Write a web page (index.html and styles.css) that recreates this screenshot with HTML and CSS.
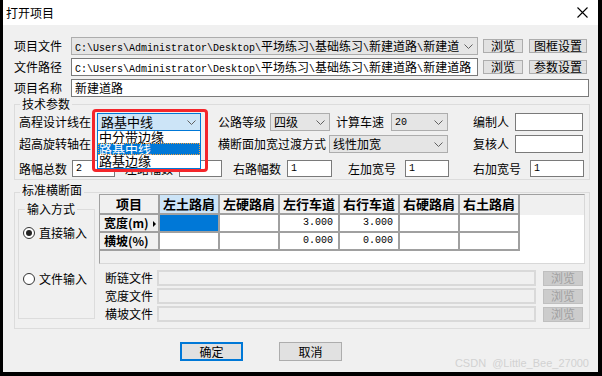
FILE: index.html
```html
<!DOCTYPE html>
<html lang="zh-CN">
<head>
    <meta charset="UTF-8">
    <meta name="viewport" content="width=device-width, initial-scale=1.0">
    <title>打开项目</title>
    <link rel="stylesheet" href="styles.css">
</head>
<body>
<div class="dialog">
    <div class="titlebar">
        <span>打开项目</span>
        <svg class="close" width="11" height="11" viewBox="0 0 11 11"><path d="M0.5 0.5L10.5 10.5M10.5 0.5L0.5 10.5" stroke="#000" stroke-width="1.1" fill="none"/></svg>
    </div>

    <div class="content">
        <div class="row r1">
            <span class="lbl w57">项目文件</span>
            <div class="combo w407">
                <span class="val"><span class="asc">C:\Users\Administrator\Desktop\</span>平场练习<span class="asc">\</span>基础练习<span class="asc">\</span>新建道路<span class="asc">\</span>新建道</span>
                <svg class="arr" width="9" height="5" viewBox="0 0 9 5"><path d="M0.5 0.5L4.5 4.5L8.5 0.5" fill="none" stroke="#606060"/></svg>
            </div>
            <button class="btn ml5 w40">浏览</button>
            <button class="btn ml6 w58">图框设置</button>
        </div>
        <div class="row">
            <span class="lbl w57">文件路径</span>
            <div class="field w407"><span class="val"><span class="asc">C:\Users\Administrator\Desktop\</span>平场练习<span class="asc">\</span>基础练习<span class="asc">\</span>新建道路<span class="asc">\</span>新建道路</span></div>
            <button class="btn ml5 w40">浏览</button>
            <button class="btn ml6 w58">参数设置</button>
        </div>
        <div class="row">
            <span class="lbl w57">项目名称</span>
            <div class="field w518"><span class="val">新建道路</span></div>
        </div>

        <div class="group g1">
            <span class="gtitle">技术参数</span>
            <div class="grow">
                <span class="lbl w78">高程设计线在</span>
                <div class="combo active w104">
                    <span class="val">路基中线</span>
                    <svg class="arr" width="9" height="5" viewBox="0 0 9 5"><path d="M0.5 0.5L4.5 4.5L8.5 0.5" fill="none" stroke="#606060"/></svg>
                    <div class="droplist">
                        <div class="item">中分带边缘</div>
                        <div class="item sel">路基中线</div>
                        <div class="item">路基边缘</div>
                    </div>
                    <div class="mark"></div>
                </div>
                <span class="lbl ml17 w52">公路等级</span>
                <div class="combo w60">
                    <span class="val">四级</span>
                    <svg class="arr" width="9" height="5" viewBox="0 0 9 5"><path d="M0.5 0.5L4.5 4.5L8.5 0.5" fill="none" stroke="#606060"/></svg>
                </div>
                <span class="lbl ml6 w55">计算车速</span>
                <div class="combo w57">
                    <span class="val asc">20</span>
                    <svg class="arr" width="9" height="5" viewBox="0 0 9 5"><path d="M0.5 0.5L4.5 4.5L8.5 0.5" fill="none" stroke="#606060"/></svg>
                </div>
                <span class="lbl ml25 w42">编制人</span>
                <div class="field w68"></div>
            </div>
            <div class="grow gb">
                <span class="lbl w78">超高旋转轴在</span>
                <div class="combo w104">
                    <span class="val">路基中线</span>
                </div>
                <span class="lbl ml17 w111">横断面加宽过渡方式</span>
                <div class="combo w119">
                    <span class="val">线性加宽</span>
                    <svg class="arr" width="9" height="5" viewBox="0 0 9 5"><path d="M0.5 0.5L4.5 4.5L8.5 0.5" fill="none" stroke="#606060"/></svg>
                </div>
                <span class="lbl ml25 w42">复核人</span>
                <div class="field w68"></div>
            </div>
            <div class="grow gc">
                <span class="lbl w53">路幅总数</span>
                <div class="field w43"><span class="val asc">2</span></div>
                <span class="lbl ml10 w54">左路幅数</span>
                <div class="field w43"><span class="val asc">1</span></div>
                <span class="lbl ml11 w54">右路幅数</span>
                <div class="field w45"><span class="val asc">1</span></div>
                <span class="lbl ml16 w57">左加宽号</span>
                <div class="field w44"><span class="val asc">1</span></div>
                <span class="lbl ml24 w57">右加宽号</span>
                <div class="field w54"><span class="val asc">1</span></div>
            </div>
        </div>

        <div class="group g2">
            <span class="gtitle t2">标准横断面</span>
            <div class="group mode">
                <span class="gtitle t3">输入方式</span>
                <div class="radio on"><span class="dot"></span>直接输入</div>
                <div class="radio"><span class="dot"></span>文件输入</div>
            </div>
            <div class="right">
                <div class="gridbox">
                    <table class="grid">
                        <tr>
                            <th class="c0">项目</th>
                            <th class="hsel">左土路肩</th>
                            <th>左硬路肩</th>
                            <th>左行车道</th>
                            <th>右行车道</th>
                            <th>右硬路肩</th>
                            <th>右土路肩</th>
                        </tr>
                        <tr>
                            <th class="rh">宽度(m)<span class="ptr"></span></th>
                            <td class="cur"></td>
                            <td></td>
                            <td class="num">3.000</td>
                            <td class="num">3.000</td>
                            <td></td>
                            <td></td>
                        </tr>
                        <tr>
                            <th class="rh">横坡(%)</th>
                            <td></td>
                            <td></td>
                            <td class="num">0.000</td>
                            <td class="num">0.000</td>
                            <td></td>
                            <td></td>
                        </tr>
                    </table>
                </div>
                <div class="frow f1">
                    <span class="lbl w52">断链文件</span>
                    <div class="field off w379"></div>
                    <button class="btn dis">浏览</button>
                </div>
                <div class="frow">
                    <span class="lbl w52">宽度文件</span>
                    <div class="field off w379"></div>
                    <button class="btn dis">浏览</button>
                </div>
                <div class="frow">
                    <span class="lbl w52">横坡文件</span>
                    <div class="field off w379"></div>
                    <button class="btn dis">浏览</button>
                </div>
            </div>
        </div>

        <div class="actions">
            <button class="btn big ok">确定</button>
            <button class="btn big">取消</button>
        </div>
    </div>

    <div class="watermark">CSDN&nbsp; @Little_Bee_27000</div>
</div>
</body>
</html>
```

FILE: styles.css
```css
* { box-sizing: border-box; }
body { margin: 0; width: 602px; height: 376px; overflow: hidden; background: #000; color: #000; font: 12px/14px "Noto Sans CJK SC", sans-serif; }

.dialog { position: relative; margin-left: 3px; width: 595px; height: 372px; background: #f0f0f0; }
.titlebar { height: 25px; background: #fff; display: flex; align-items: center; justify-content: space-between; padding: 0 10px 0 3px; }

.content { padding: 0 8px 0 11px; }
.row { display: flex; align-items: center; height: 18px; margin-top: 3px; }
.r1 { margin-top: 12px; }
.lbl { flex: none; white-space: nowrap; }

.combo, .field { flex: none; height: 18px; display: flex; align-items: center; justify-content: space-between; overflow: visible; white-space: nowrap; }
.combo { background: #e5e5e5; border: 1px solid #adadad; padding: 0 4px 0 3px; }
.field { background: #fff; border: 1px solid #7a7a7a; padding: 0 3px; }
.val { overflow: hidden; }
.asc { font: 10px "Liberation Mono", monospace; }
.arr { flex: none; }

.btn { flex: none; height: 14px; padding: 0; font: 12px/12px "Noto Sans CJK SC", sans-serif; background: #e1e1e1; border: 1px solid #adadad; color: #000; }

/* group boxes */
.group { position: relative; border: 1px solid #dcdcdc; }
.gtitle { position: absolute; top: -8px; left: 5px; padding: 0 2px; background: #f0f0f0; }
.g1 { margin-top: 7px; height: 76px; padding: 8px 0 0 4px; }
.grow { display: flex; align-items: center; height: 18px; }
.gb { margin-top: 4px; }
.gc { margin-top: 7px; height: 17px; }
.gc .field { height: 17px; }

.combo.active { position: relative; background: #cce4f7; border-color: #0078d7; font-size: 13px; }
.droplist { position: absolute; left: -1px; top: 17px; width: 104px; height: 38px; background: #fff; border: 1px solid #0078d7; border-top: none; font-size: 13px; line-height: 12px; }
.item { height: 12px; padding-left: 1px; }
.item.sel { background: #0078d7; color: #fff; outline: 1px dotted #f0a040; outline-offset: -1px; }
.mark { position: absolute; left: -6px; top: -5px; width: 116px; height: 63px; border: 3px solid #f4262b; border-radius: 4px; }

.g2 { margin-top: 12px; height: 137px; display: flex; align-items: flex-start; }
.t2 { top: -10px; }
.mode { flex: none; margin: 16px 0 0 3px; width: 77px; height: 110px; padding: 16px 0 0 4px; }
.t3 { left: 6px; }
.radio { display: flex; align-items: center; height: 14px; }
.radio + .radio { margin-top: 32px; }
.dot { width: 12px; height: 12px; margin-right: 4px; border: 1px solid #333; border-radius: 50%; background: #fff; display: flex; align-items: center; justify-content: center; }
.radio.on .dot::after { content: ""; width: 6px; height: 6px; border-radius: 50%; background: #222; }

.right { flex: none; margin: 1px 0 0 4px; width: 486px; }
.gridbox { height: 70px; border: 1px solid #d8d8d8; border-top-color: #a0a0a0; border-left-color: #a0a0a0;
    background: linear-gradient(#f0f0f0, #f0f0f0) 0 0 / 100% 20px no-repeat, linear-gradient(#f0f0f0, #f0f0f0) 0 0 / 60px 100% no-repeat, #fff; }
.grid { border-collapse: separate; border-spacing: 0; table-layout: fixed; width: 420px; }
.grid th, .grid td { box-sizing: content-box; width: 58px; height: 16px; padding: 0; border-right: 2px solid #a0a0a0; border-bottom: 2px solid #a0a0a0; white-space: nowrap; }
.grid tr:first-child th { height: 18px; font: bold 13px/18px "Noto Sans CJK SC", sans-serif; text-align: center; }
.grid .hsel { background: #cce4f7; }
.grid .rh { font: bold 12px/16px "Noto Sans CJK SC", sans-serif; text-align: left; padding-left: 4px; width: 54px; }
.ptr { display: inline-block; margin-left: 4px; border-left: 3px solid #000; border-top: 3px solid transparent; border-bottom: 3px solid transparent; vertical-align: 1px; }
.grid .cur { background: #0078d7; }
.grid .num { font: 10px/16px "Liberation Mono", monospace; text-align: right; padding-right: 5px; width: 53px; }

.frow { display: flex; align-items: center; height: 16px; margin-top: 2px; padding-left: 6px; }
.f1 { margin-top: 6px; }
.field.off { height: 16px; background: #f0f0f0; border: 2px solid #d9d9d9; }
.btn.dis { margin-left: 7px; width: 40px; height: 15px; background: #cccccc; border-color: #bfbfbf; color: #a0a0a0; }

.actions { display: flex; gap: 36px; margin-top: 13px; padding-left: 166px; }
.btn.big { width: 63px; height: 19px; }
.btn.ok { border: 2px solid #0078d7; }

.watermark { position: absolute; right: 9px; bottom: 3px; font: 11px "Liberation Sans", sans-serif; color: #d2d2d2; }

.w40 { width: 40px; } .w42 { width: 42px; } .w43 { width: 43px; } .w44 { width: 44px; } .w45 { width: 45px; }
.w52 { width: 52px; } .w53 { width: 53px; } .w54 { width: 54px; } .w55 { width: 55px; } .w57 { width: 57px; }
.w58 { width: 58px; } .w60 { width: 60px; } .w68 { width: 68px; } .w78 { width: 78px; } .w104 { width: 104px; }
.w111 { width: 111px; } .w119 { width: 119px; } .w379 { width: 379px; } .w407 { width: 407px; } .w518 { width: 518px; }
.ml5 { margin-left: 5px; } .ml6 { margin-left: 6px; } .ml10 { margin-left: 10px; } .ml11 { margin-left: 11px; }
.ml16 { margin-left: 16px; } .ml17 { margin-left: 17px; } .ml24 { margin-left: 24px; } .ml25 { margin-left: 25px; }
```
